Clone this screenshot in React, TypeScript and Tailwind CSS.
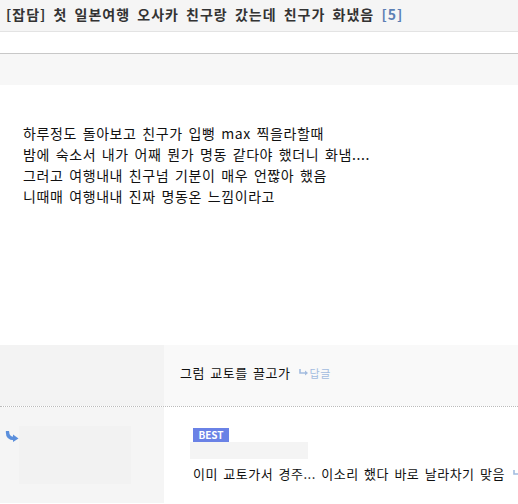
import React from "react";

const font = { fontFamily: '"Noto Sans CJK KR", "Noto Sans", sans-serif' };

function ReplyArrow({ className }: { className?: string }) {
  return (
    <svg className={className} width="10" height="8" viewBox="0 0 10 8" fill="none">
      <path d="M1 0 V4 H7" stroke="currentColor" strokeWidth="1.6" />
      <path d="M6 1.5 L9 4 L6 6.5 Z" fill="currentColor" />
    </svg>
  );
}

function CurvedArrow() {
  return (
    <svg width="14" height="11" viewBox="0 0 14 11">
      <path d="M2.5 1 C2.5 5.5 5 7.5 9 7.5" stroke="#5b8fdc" strokeWidth="3.4" fill="none" strokeLinecap="round" />
      <path d="M8 3.5 L13.5 7.5 L8 11 Z" fill="#5b8fdc" />
    </svg>
  );
}

export default function App() {
  return (
    <div className="w-[518px] h-[504px] overflow-hidden bg-white text-[#111]" style={font}>
      <div className="h-[32px] bg-[#f5f5f5] border-b border-[#e3e3e3] flex items-center pl-[6px] pb-[2px]">
        <span className="text-[14px] font-bold text-[#333] tracking-[1px] [word-spacing:3px] whitespace-nowrap">
          [잡담] 첫 일본여행 오사카 친구랑 갔는데 친구가 화냈음{" "}
          <span className="text-[#5b7fb4]">[5]</span>
        </span>
      </div>
      <div className="h-[22px] bg-white border-b border-[#c8c8c8]"></div>
      <div className="h-[31px] bg-[#f7f7f7]"></div>
      <div className="h-[260px] bg-white pt-[38px] pl-[23px] text-[14px] leading-[21px] tracking-[0.6px] [word-spacing:2px] text-[#111]">
        <p>하루정도 돌아보고 친구가 입뻥 max 찍을라할때</p>
        <p>밤에 숙소서 내가 어째 뭔가 명동 같다야 했더니 화냄....</p>
        <p>그러고 여행내내 친구넘 기분이 매우 언짢아 했음</p>
        <p>니때매 여행내내 진짜 명동온 느낌이라고</p>
      </div>
      <div className="flex h-[62px] border-b border-dotted border-[#bbb]">
        <div className="w-[164px] bg-[#f3f3f3]"></div>
        <div className="flex-1 bg-[#f9f9f9] flex items-center pl-[16px] pb-[5px] text-[13px] tracking-[0.5px] [word-spacing:2px] whitespace-nowrap">
          <span>그럼 교토를 끌고가</span>
          <span className="ml-[8px] flex items-center text-[#a3bcdf] text-[11px]">
            <ReplyArrow className="mr-[1px]" />
            답글
          </span>
        </div>
      </div>
      <div className="flex h-[96px]">
        <div className="w-[164px] bg-[#f5f5f5] flex items-start pt-[19px] pl-[5px]">
          <div className="mt-[5px]">
            <CurvedArrow />
          </div>
          <div className="w-[112px] h-[58px] bg-[#f2f2f2]"></div>
        </div>
        <div className="flex-1 bg-white pl-[29px] pt-[21px] whitespace-nowrap overflow-hidden">
          <div className="w-[36px] h-[14px] bg-[#6a82e6] text-white text-[10px] font-bold leading-[14px] text-center">
            BEST
          </div>
          <div className="ml-[-3px] w-[118px] h-[17px] bg-[#f4f4f4]"></div>
          <div className="mt-[5px] flex items-center text-[13px] tracking-[0.5px] [word-spacing:2px]">
            <span>이미 교토가서 경주... 이소리 했다 바로 날라차기 맞음</span>
            <span className="ml-[8px] flex items-center text-[#a3bcdf] text-[11px]">
              <ReplyArrow className="mr-[1px]" />
              답글
            </span>
          </div>
        </div>
      </div>
    </div>
  );
}
